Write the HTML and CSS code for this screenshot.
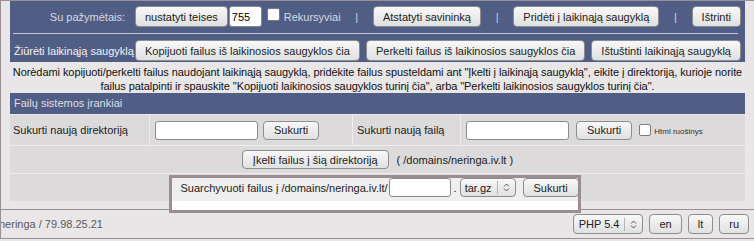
FILE: index.html
```html
<!DOCTYPE html>
<html lang="lt">
<head>
    <meta charset="UTF-8">
    <meta name="viewport" content="width=device-width, initial-scale=1.0">
    <title>Failų tvarkyklė</title>
    <link rel="stylesheet" href="styles.css">
</head>
<body>
<div class="frame">
    <div class="main">
        <div class="toolbar">
            <div class="toolbar-row">
                <span class="label label-right">Su pažymėtais:</span>
                <div class="actions">
                    <div class="group">
                        <button class="btn">nustatyti teises</button>
                        <input class="field perm" type="text" value="755">
                        <label class="check"><input class="box" type="checkbox"><span>Rekursyviai</span></label>
                    </div>
                    <span class="sep">|</span>
                    <button class="btn">Atstatyti savininką</button>
                    <span class="sep">|</span>
                    <button class="btn">Pridėti į laikinąją saugyklą</button>
                    <span class="sep">|</span>
                    <button class="btn">Ištrinti</button>
                </div>
            </div>
            <hr class="divider">
            <div class="toolbar-row">
                <a class="label link" href="#clipboard">Žiūrėti laikinąją saugyklą</a>
                <div class="actions">
                    <button class="btn">Kopijuoti failus iš laikinosios saugyklos čia</button>
                    <button class="btn">Perkelti failus iš laikinosios saugyklos čia</button>
                    <button class="btn">Ištuštinti laikinąją saugyklą</button>
                </div>
            </div>
        </div>

        <p class="hint">Norėdami kopijuoti/perkelti failus naudojant laikinąją saugyklą, pridėkite failus spusteldami ant "Įkelti į laikinąją saugyklą", eikite į direktoriją, kurioje norite<br>failus patalpinti ir spauskite "Kopijuoti laikinosios saugyklos turinį čia", arba "Perkelti laikinosios saugyklos turinį čia".</p>

        <div class="section-title">Failų sistemos įrankiai</div>

        <div class="tools">
            <div class="cell first">Sukurti naują direktoriją</div>
            <div class="cell">
                <input class="field name" type="text">
                <button class="btn btn-small">Sukurti</button>
            </div>
            <div class="cell">Sukurti naują failą</div>
            <div class="cell">
                <input class="field name" type="text">
                <button class="btn btn-small spaced">Sukurti</button>
                <label class="check check-small"><input class="box" type="checkbox"><span>Html ruošinys</span></label>
            </div>
            <div class="cell wide center">
                <button class="btn btn-small">Įkelti failus į šią direktoriją</button>
                <span class="path">( /domains/neringa.iv.lt )</span>
            </div>
            <div class="cell wide archive-row">
                <div class="archive">
                    <div class="archive-top">
                        <span>Suarchyvuoti failus į /domains/neringa.iv.lt/</span>
                        <input class="field archive-name" type="text">
                        <span class="dot">.</span>
                        <span class="select">
                            <span class="select-text">tar.gz</span>
                            <span class="select-arrow">
                                <svg width="7" height="11" viewBox="0 0 7 11"><path d="M1 4.5 L3.5 2 L6 4.5 M1 6.5 L3.5 9 L6 6.5" fill="none" stroke="#555" stroke-width="1"/></svg>
                            </span>
                        </span>
                        <button class="btn btn-small">Sukurti</button>
                    </div>
                    <div class="archive-bottom"></div>
                </div>
            </div>
        </div>
    </div>

    <div class="footer">
        <span class="host">neringa / 79.98.25.21</span>
        <div class="footer-controls">
            <span class="select select-footer">
                <span class="select-text">PHP 5.4</span>
                <span class="select-arrow">
                    <svg width="7" height="11" viewBox="0 0 7 11"><path d="M1 4.5 L3.5 2 L6 4.5 M1 6.5 L3.5 9 L6 6.5" fill="none" stroke="#555" stroke-width="1"/></svg>
                </span>
            </span>
            <button class="btn btn-footer">en</button>
            <button class="btn btn-footer">lt</button>
            <button class="btn btn-footer">ru</button>
        </div>
    </div>
</div>
</body>
</html>
```

FILE: styles.css
```css
* {
    box-sizing: border-box;
}
body {
    margin: 0;
    background: #e8e6e6;
    font-family: "Liberation Sans", Arial, sans-serif;
    font-size: 11px;
    color: #222;
}
.frame {
    width: 754px;
    height: 239px;
    border-top: 1px solid #9c9096;
    border-left: 1px solid #9c9096;
    border-bottom: 1px solid #9c9096;
    overflow: hidden;
}
.main {
    height: 208px;
    padding: 0 9px;
}

/* top toolbar */
.toolbar {
    background: #505e86;
    padding: 5px 4px 1px 0;
}
.toolbar-row {
    display: grid;
    grid-template-columns: 125px 1fr;
    align-items: center;
    height: 21px;
}
.label {
    color: #d8d9e0;
    white-space: nowrap;
}
.label-right {
    text-align: right;
    padding-right: 10px;
}
.link {
    color: #f2f2f2;
    text-decoration: none;
    padding-left: 4px;
}
.actions {
    display: flex;
    justify-content: space-between;
    align-items: center;
}
.group {
    display: flex;
    align-items: center;
}
.sep {
    color: #d0d2dc;
}
.divider {
    border: 0;
    border-top: 1px solid #c6c8d4;
    margin: 6px 3px;
}

/* controls */
.btn {
    height: 21px;
    padding: 0 9px;
    border: 1px solid #8d8d8d;
    border-radius: 4px;
    background: linear-gradient(#f8f8f8, #e0e0e0);
    color: #222;
    font-family: inherit;
    font-size: 11px;
    white-space: nowrap;
}
.btn-small {
    height: 19px;
    padding: 0 10px;
}
.btn-footer {
    height: 20px;
    padding: 0 9px;
}
.field {
    height: 19px;
    border: 1px solid #8a8a8a;
    border-radius: 3px;
    background: #fff;
    font-family: inherit;
    font-size: 11px;
    padding: 0 2px;
}
.perm {
    width: 33px;
    height: 21px;
    margin-left: 1px;
}
.check {
    display: flex;
    align-items: center;
    color: #d8d9e0;
    margin-left: 5px;
}
.box {
    appearance: none;
    width: 13px;
    height: 13px;
    margin: -5px 4px 0 0;
    border: 1px solid #7a7a7a;
    border-radius: 2px;
    background: #fff;
}
.check-small {
    color: #333;
    font-size: 8px;
    margin-left: 7px;
    align-items: flex-end;
}
.check-small .box {
    width: 12px;
    height: 12px;
    margin: 0 3px 0 0;
}

/* hint text */
.hint {
    margin: 0;
    padding-top: 3px;
    height: 31px;
    line-height: 14px;
    text-align: center;
    white-space: nowrap;
    letter-spacing: -0.07px;
    color: #111;
}

.section-title {
    background: #505e86;
    color: #dedee4;
    height: 21px;
    line-height: 21px;
    padding-left: 4px;
}

/* tools table */
.tools {
    display: grid;
    grid-template-columns: 139px 202px 107px 1fr;
    grid-template-rows: 30px 27px 27px;
    gap: 1px;
    padding-top: 1px;
    background: #eeecec;
}
.cell {
    background: #dcdada;
    display: flex;
    align-items: center;
    padding: 0 4px;
    white-space: nowrap;
}
.cell.first {
    padding-left: 3px;
}
.cell .field.name {
    width: 103px;
    margin-left: 1px;
    margin-right: 5px;
}
.spaced {
    margin-left: 2px;
}
.wide {
    grid-column: 1 / 5;
}
.center {
    justify-content: center;
}
.path {
    margin-left: 8px;
}

/* archive popup */
.archive-row {
    justify-content: center;
    align-items: flex-start;
    padding: 1px 6px 0 0;
}
.archive {
    position: relative;
    z-index: 1;
    width: 412px;
    border: 3px solid #9d8d93;
    background: #fff;
}
.archive-top {
    display: flex;
    align-items: center;
    height: 23px;
    padding: 0 6px 4px 9px;
    background: #efefef;
}
.archive-name {
    width: 62px;
    margin-left: 1px;
}
.dot {
    margin: 0 3px;
}
.archive-top .btn {
    margin-left: 7px;
}
.archive-bottom {
    height: 9px;
}

.select {
    display: inline-flex;
    align-items: center;
    height: 19px;
    border: 1px solid #8d8d8d;
    border-radius: 4px;
    background: linear-gradient(#f8f8f8, #e0e0e0);
    color: #222;
}
.select-text {
    padding: 0 5px 0 4px;
}
.select-arrow {
    display: flex;
    align-items: center;
    height: 13px;
    border-left: 1px solid #b4b4b4;
    padding: 0 5px 0 5px;
}
.select-footer {
    height: 20px;
}
.select-footer .select-text {
    padding: 0 5px;
}

/* footer */
.footer {
    height: 29px;
    border-top: 1px solid #9c9096;
    display: flex;
    justify-content: space-between;
    align-items: center;
    padding-right: 5px;
}
.host {
    color: #5a5a5a;
    margin-left: -2px;
}
.footer-controls {
    display: flex;
    align-items: center;
    gap: 6px;
}
```
